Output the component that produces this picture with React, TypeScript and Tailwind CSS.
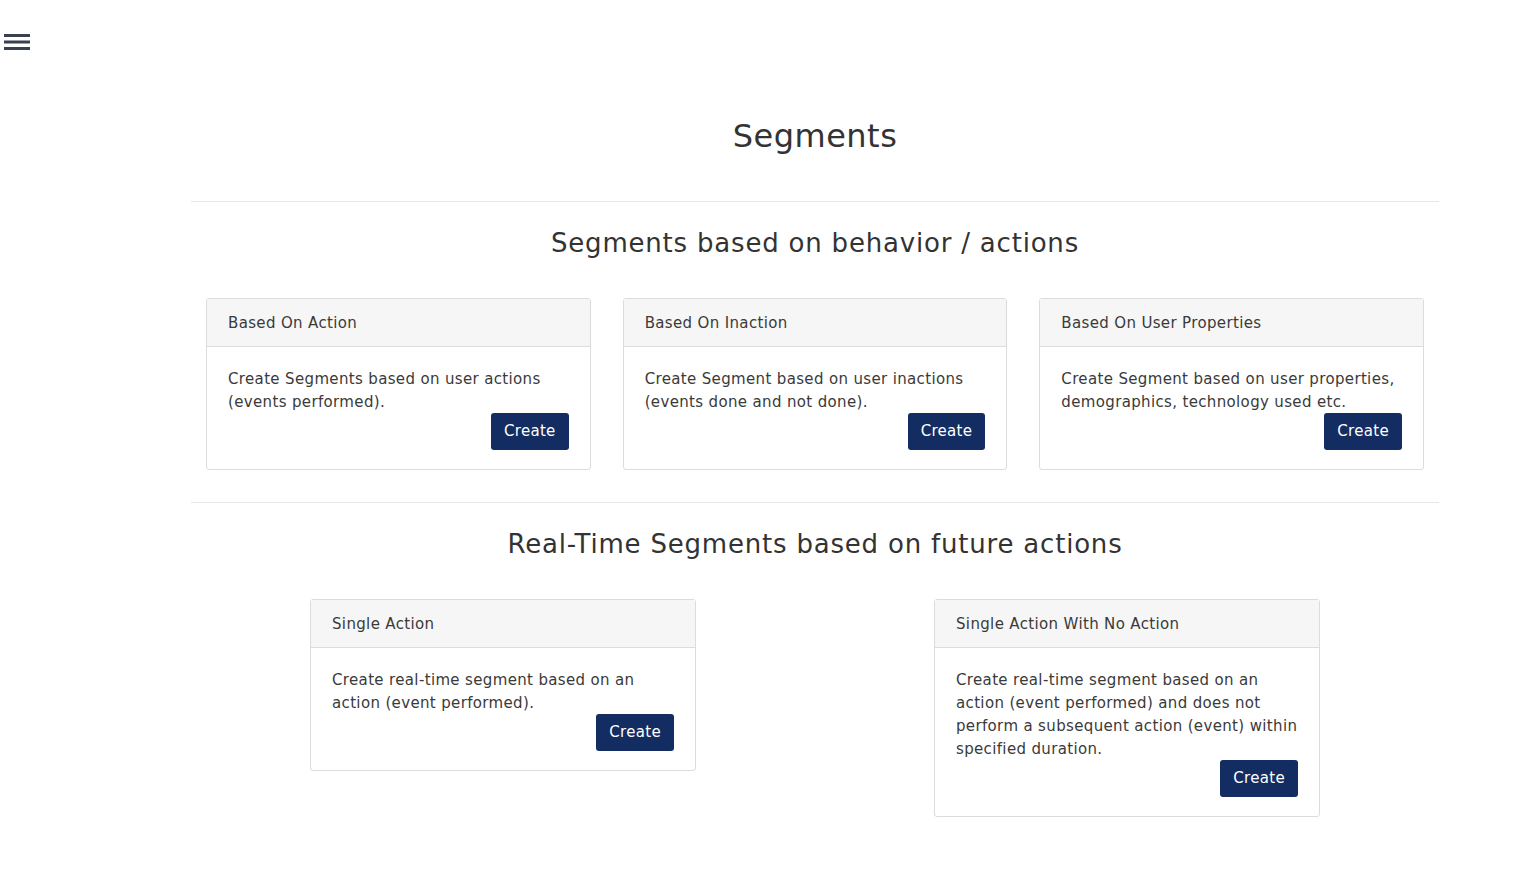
const behaviorCards = [
  {
    title: "Based On Action",
    text: "Create Segments based on user actions (events performed).",
  },
  {
    title: "Based On Inaction",
    text: "Create Segment based on user inactions (events done and not done).",
  },
  {
    title: "Based On User Properties",
    text: "Create Segment based on user properties, demographics, technology used etc.",
  },
];

function SegmentCard({ title, text }: { title: string; text: string }) {
  return (
    <div className="border border-[#dcdcdc] rounded-[3px] bg-white">
      <div className="h-[48px] flex items-center px-[21px] pt-[2px] bg-[#f6f6f6] border-b border-[#dcdcdc] text-[15px] tracking-[0.35px] text-[#3a3a3a]">
        {title}
      </div>
      <div className="px-[21px] pt-[21px] pb-[19px]">
        <p className="text-[15px] leading-[23px] tracking-[0.35px] text-[#3a3a3a]">{text}</p>
        <div className="flex justify-end -mt-[1px]">
          <button className="h-[37px] px-[13px] rounded-[3px] bg-[#132d62] text-white text-[15px] tracking-[0.3px]">
            Create
          </button>
        </div>
      </div>
    </div>
  );
}

export default function App() {
  return (
    <div
      className="min-h-screen bg-white text-[#333]"
      style={{ fontFamily: '"DejaVu Sans", "Open Sans", sans-serif' }}
    >
      {/* Top bar */}
      <div className="h-[80px] pl-[4px] pt-[34px]">
        <svg width="26" height="17" viewBox="0 0 26 17" className="text-[#3b3f52]">
          <rect x="0" y="0" width="26" height="3" fill="currentColor" />
          <rect x="0" y="6.5" width="26" height="3" fill="currentColor" />
          <rect x="0" y="13" width="26" height="3" fill="currentColor" />
        </svg>
      </div>

      <div className="w-[1248px] ml-[191px]">
        <h1 className="text-[32px] tracking-[0.5px] text-center text-[#333] pt-[32px] pb-[41px]">Segments</h1>
        <hr className="border-[#e6e6e6]" />

        {/* Behavior section */}
        <h2 className="text-[26px] tracking-[0.8px] text-center text-[#333] mt-[22px] mb-[35px]">
          Segments based on behavior / actions
        </h2>
        <div className="grid grid-cols-3 gap-[32px] px-[15px]">
          {behaviorCards.map((c) => (
            <SegmentCard key={c.title} title={c.title} text={c.text} />
          ))}
        </div>

        <hr className="border-[#e6e6e6] mt-[32px]" />

        {/* Real-time section */}
        <h2 className="text-[26px] tracking-[0.8px] text-center text-[#333] mt-[22px] mb-[35px]">
          Real-Time Segments based on future actions
        </h2>
        <div className="grid grid-cols-12 items-start">
          <div className="col-start-2 col-span-4 px-[15px]">
            <SegmentCard
              title="Single Action"
              text="Create real-time segment based on an action (event performed)."
            />
          </div>
          <div className="col-start-8 col-span-4 px-[15px]">
            <SegmentCard
              title="Single Action With No Action"
              text="Create real-time segment based on an action (event performed) and does not perform a subsequent action (event) within specified duration."
            />
          </div>
        </div>
      </div>
    </div>
  );
}
